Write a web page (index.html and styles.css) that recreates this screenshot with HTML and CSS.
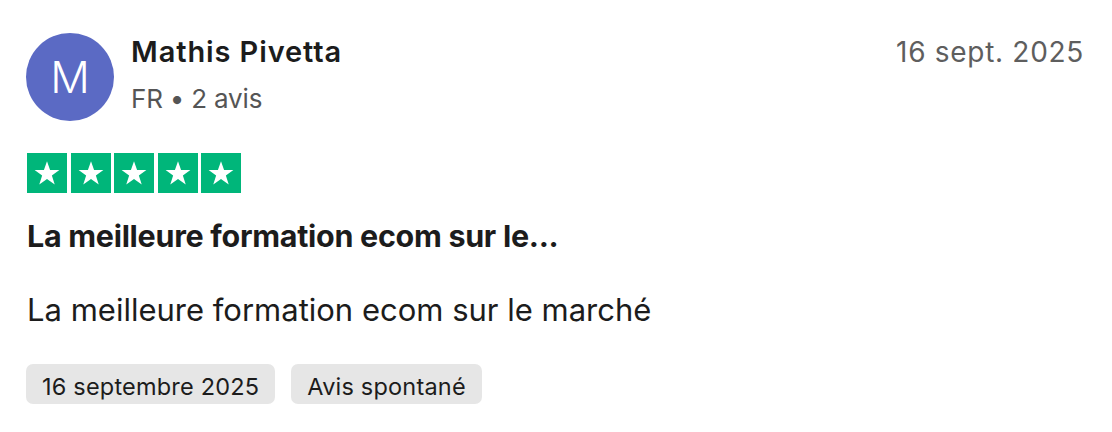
FILE: index.html
```html
<!DOCTYPE html>
<html lang="fr">
<head>
<meta charset="utf-8">
<link rel="stylesheet" href="styles.css">
</head>
<body>
<article class="review">
  <header class="head">
    <div class="avatar">M</div>
    <div class="who">
      <div class="name">Mathis Pivetta</div>
      <div class="meta">FR • 2 avis</div>
    </div>
    <div class="date">16 sept. 2025</div>
  </header>
  <div class="stars">
    <span class="star"><svg viewBox="0 0 24 24"><path d="M12 3.2l2.3 6.6h7l-5.65 4.1 2.15 6.7L12 16.5l-5.8 4.1 2.15-6.7-5.65-4.1h7z" fill="#fff"/></svg></span>
    <span class="star"><svg viewBox="0 0 24 24"><path d="M12 3.2l2.3 6.6h7l-5.65 4.1 2.15 6.7L12 16.5l-5.8 4.1 2.15-6.7-5.65-4.1h7z" fill="#fff"/></svg></span>
    <span class="star"><svg viewBox="0 0 24 24"><path d="M12 3.2l2.3 6.6h7l-5.65 4.1 2.15 6.7L12 16.5l-5.8 4.1 2.15-6.7-5.65-4.1h7z" fill="#fff"/></svg></span>
    <span class="star"><svg viewBox="0 0 24 24"><path d="M12 3.2l2.3 6.6h7l-5.65 4.1 2.15 6.7L12 16.5l-5.8 4.1 2.15-6.7-5.65-4.1h7z" fill="#fff"/></svg></span>
    <span class="star"><svg viewBox="0 0 24 24"><path d="M12 3.2l2.3 6.6h7l-5.65 4.1 2.15 6.7L12 16.5l-5.8 4.1 2.15-6.7-5.65-4.1h7z" fill="#fff"/></svg></span>
  </div>
  <h2 class="title">La meilleure formation ecom sur le...</h2>
  <p class="body">La meilleure formation ecom sur le marché</p>
  <div class="tags">
    <span class="tag">16 septembre 2025</span>
    <span class="tag">Avis spontané</span>
  </div>
</article>
</body>
</html>
```
FILE: styles.css
```css
* { box-sizing: border-box; }
html, body { margin: 0; background: #fff; }
body {
  font-family: Inter, "Noto Sans", sans-serif;
  color: #1c1c1c;
}
.review {
  padding: 33px 28px 0 26px;
  width: 1112px;
}
.head {
  display: flex;
  align-items: flex-start;
}
.avatar {
  width: 88px;
  height: 88px;
  border-radius: 50%;
  background: #5b6ac4;
  color: #fff;
  font-size: 44px;
  font-weight: 300;
  display: flex;
  align-items: center;
  justify-content: center;
  flex: none;
}
.who {
  margin-left: 17px;
  flex: 1;
  padding-top: 2px;
}
.name {
  font-size: 29px;
  font-weight: 600;
  line-height: 34px;
  letter-spacing: 0.9px;
}
.meta {
  font-size: 26px;
  line-height: 32px;
  margin-top: 14px;
  color: #555;
  letter-spacing: -0.2px;
}
.date {
  font-size: 28px;
  line-height: 34px;
  color: #5e5e5e;
  padding-top: 2px;
  letter-spacing: 0.7px;
}
.stars {
  display: flex;
  gap: 3.5px;
  margin-top: 32px;
  margin-left: 1px;
}
.star {
  width: 40px;
  height: 40px;
  background: #00b67a;
  display: flex;
  align-items: center;
  justify-content: center;
}
.star svg { width: 32px; height: 32px; }
.title {
  margin: 23px 0 0 1px;
  font-size: 30.5px;
  font-weight: 700;
  line-height: 40px;
  letter-spacing: -0.3px;
}
.body {
  margin: 34px 0 0 1px;
  font-size: 31px;
  line-height: 40px;
  letter-spacing: 0;
}
.tags {
  display: flex;
  gap: 16px;
  margin-top: 34px;
}
.tag {
  background: #e6e6e6;
  border-radius: 7px;
  height: 40px;
  padding: 5px 16px 0;
  display: flex;
  align-items: center;
  font-size: 23.5px;
  letter-spacing: 0.2px;
}
```
